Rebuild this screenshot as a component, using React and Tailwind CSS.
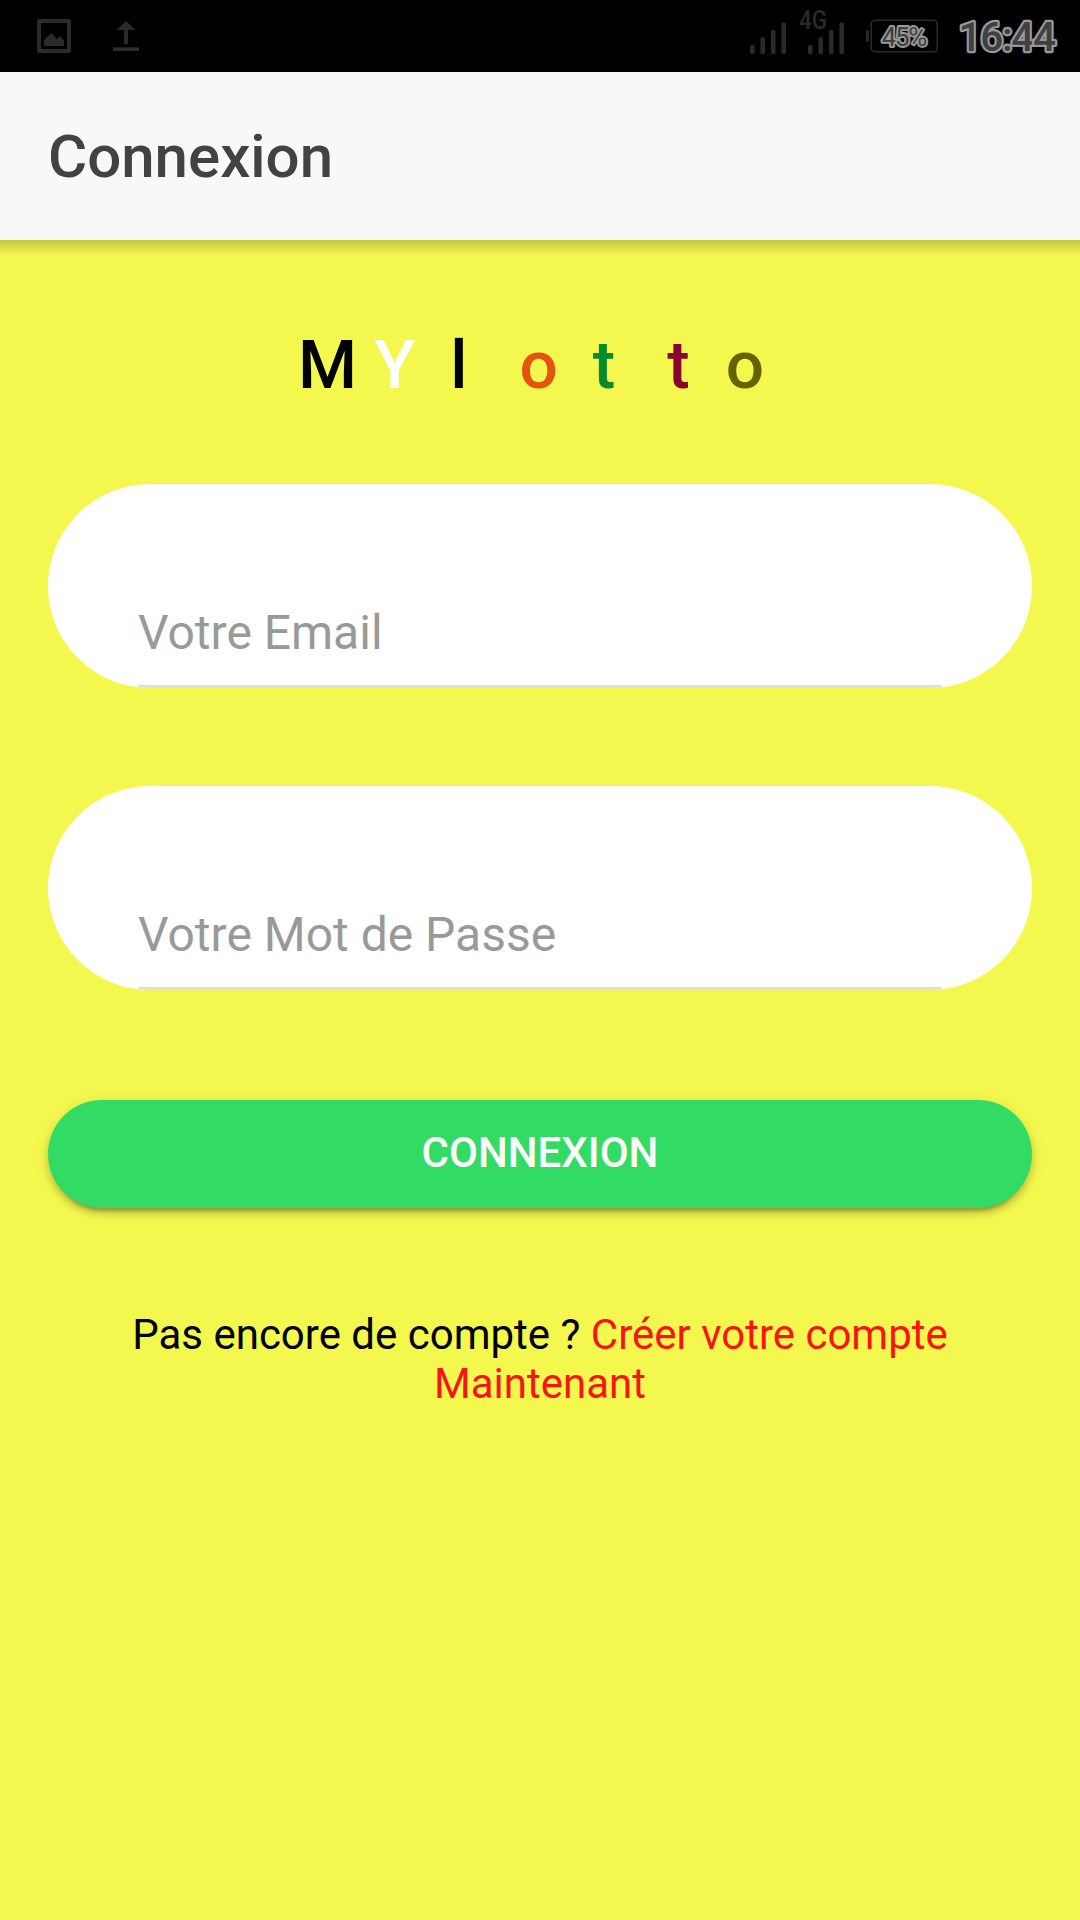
import { useState } from 'react';

// ── Lettres du logo ───────────────────────────────────────────────────────────
const LETTERS = [
  { char: 'M', style: 'text-black' },
  { char: 'Y', style: 'text-white ml-[17px]' },
  { char: 'l', style: 'text-black ml-[35px]' },
  { char: 'o', style: 'text-[#e2540f] ml-[52px]' },
  { char: 't', style: 'text-[#07892d] ml-[35px]' },
  { char: 't', style: 'text-[#880530] ml-[52px]' },
  { char: 'o', style: 'text-[#656300] ml-[36px]' },
];

function StatusBar() {
  return (
    <div className="h-[72px] shrink-0 bg-black">
      <svg width="1080" height="72" viewBox="0 0 1080 72" className="block">
        {/* Image */}
        <rect x="39" y="21" width="30" height="30" fill="none" stroke="#2b2b2b" strokeWidth="4" strokeLinejoin="round" />
        <path d="M44 46V40L51.3 33L57 39L60 36L64 40.5V46Z" fill="#2b2b2b" />

        {/* Envoi */}
        <path d="M126 21L135.5 30H128V44H124V30H116.5Z" fill="#2b2b2b" />
        <rect x="113" y="47.3" width="26" height="3.7" fill="#2b2b2b" />

        {/* Réseau */}
        <g fill="#2a2a2a">
          <rect x="750" y="45" width="4.6" height="9" rx="1.5" />
          <rect x="760.4" y="37.3" width="4.6" height="16.7" rx="1.5" />
          <rect x="770.9" y="30" width="4.6" height="24" rx="1.5" />
          <rect x="781.4" y="22.5" width="4.6" height="31.5" rx="1.5" />
          <rect x="808" y="45" width="4.6" height="9" rx="1.5" />
          <rect x="818.4" y="37.3" width="4.6" height="16.7" rx="1.5" />
          <rect x="828.9" y="30" width="4.6" height="24" rx="1.5" />
          <rect x="839.4" y="22.5" width="4.6" height="31.5" rx="1.5" />
        </g>
        <text x="799" y="28.5" textLength="28" lengthAdjust="spacingAndGlyphs" fill="#2a2a2a" className="font-[Roboto,sans-serif] text-[25px] font-medium">4G</text>

        {/* Batterie */}
        <rect x="866" y="30" width="2.8" height="12" rx="1.2" fill="#2a2a2a" />
        <rect x="871.2" y="20.2" width="66" height="31.6" rx="3.5" fill="none" stroke="#2a2a2a" strokeWidth="1.5" />
        <g fill="#404040" stroke="#999" strokeLinejoin="round" paintOrder="stroke" className="font-[Roboto,sans-serif]">
          <text x="881.8" y="46" textLength="45.5" strokeWidth="3.8" className="text-[26px]">45%</text>
          <text x="958.5" y="51.3" textLength="97.5" strokeWidth="4.4" className="text-[40.5px] font-medium">16:44</text>
        </g>
      </svg>
    </div>
  );
}

function Field({ type, placeholder, value, onChange }) {
  return (
    <label className="flex h-[204px] items-end overflow-hidden rounded-full bg-white px-[90px]">
      <input
        type={type}
        value={value}
        onChange={e => onChange(e.target.value)}
        placeholder={placeholder}
        className="h-[108px] w-full border-b-[3px] border-[#dedede] pt-6 pb-[25px] text-[48px] leading-[56px] text-black outline-none placeholder:text-[#999]"
      />
    </label>
  );
}

export default function App() {
  const [email, setEmail]       = useState('');
  const [password, setPassword] = useState('');

  return (
    <div className="flex h-[1920px] w-[1080px] flex-col overflow-hidden bg-[#f4f84e] font-[Roboto,sans-serif]">
      <StatusBar />

      <header className="flex h-[168px] shrink-0 items-center bg-[#f8f8f8] px-12 pt-0.5">
        <h1 className="text-[60px] leading-[70px] font-medium text-[#424242]">Connexion</h1>
      </header>
      <div className="h-4 shrink-0 bg-linear-to-b from-black/20 to-transparent" />

      <main className="flex flex-col px-12 pt-[70px]">
        <h2 className="flex h-[78px] pl-[250px] text-[67.5px] leading-[78px] font-medium">
          {LETTERS.map((l, i) => (
            <span key={i} className={l.style}>{l.char}</span>
          ))}
        </h2>

        <form className="mt-20 flex flex-col" onSubmit={e => e.preventDefault()}>
          <Field type="email" placeholder="Votre Email" value={email} onChange={setEmail} />
          <div className="h-[98px]" />
          <Field type="password" placeholder="Votre Mot de Passe" value={password} onChange={setPassword} />

          <button
            type="submit"
            className="mt-[110px] h-[108px] rounded-full bg-[#32db64] pb-[3px] text-[42px] leading-[49px] font-medium text-white uppercase shadow-[0_6px_6px_0_rgba(0,0,0,0.14),0_9px_3px_-6px_rgba(0,0,0,0.2),0_3px_15px_0_rgba(0,0,0,0.12)]"
          >
            Connexion
          </button>
        </form>

        <p className="mt-[102px] px-12 text-center text-[42px] leading-[49px] text-black">
          Pas encore de compte ?{' '}
          <a href="#" className="text-[#f91414]">
            <span>Créer votre compte</span> <span>Maintenant</span>
          </a>
        </p>
      </main>
    </div>
  );
}
